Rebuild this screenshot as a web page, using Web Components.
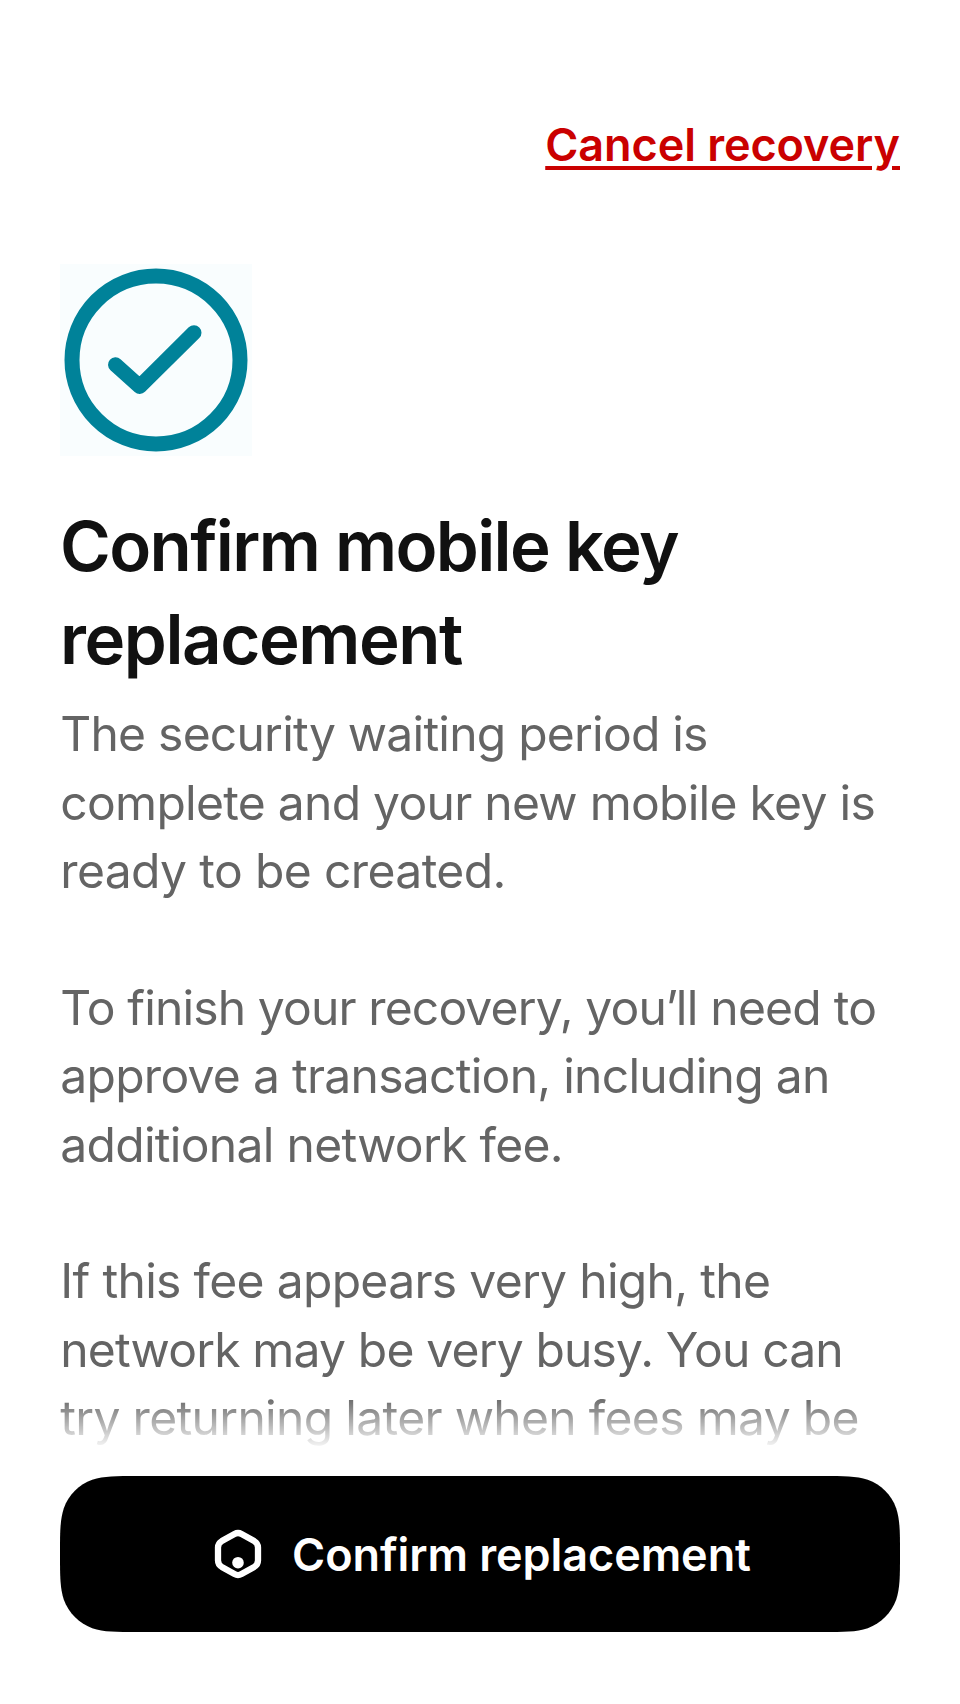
<!DOCTYPE html>
<html lang="en"><head><meta charset="utf-8"><title>Recovery</title>
<style>html,body{margin:0;background:#fff}body{font-family:Inter,"Liberation Sans",sans-serif;width:960px;height:1704px;overflow:hidden}
p span,screen-title span{letter-spacing:var(--t)}p i{font-style:normal;letter-spacing:-2.2px}</style></head>
<body>
<recovery-screen>
<cancel-link slot="top">Cancel recovery</cancel-link>
<status-icon></status-icon>
<screen-title><span style="--t:-1.63px">Confirm mobile key</span><br><span style="--t:-1.45px">replacement</span></screen-title>
<body-copy>
<p><span style="--t:-.77px">The security waiting period is</span><br><span style="--t:-.72px">complete and your new mobile key is</span><br><span style="--t:-.62px">ready to be created.</span></p>
<p><span style="--t:-.86px">To finish your recovery, </span><span style="--t:-.75px">yo<i>u’</i>ll need to</span><br><span style="--t:-.72px">approve a transaction, including an</span><br><span style="--t:-.7px">additional network fee.</span></p>
<p><span style="--t:-.68px">If this fee appears very high, the</span><br><span style="--t:-.82px">network may be very busy. You can</span><br><span style="--t:-.67px">try returning later when fees may be</span></p>
</body-copy>
<confirm-button slot="footer">Confirm replacement</confirm-button>
</recovery-screen>
<script>
const define=(name,html)=>customElements.define(name,class extends HTMLElement{
constructor(){super();this.attachShadow({mode:'open'}).innerHTML=html;}});
define('recovery-screen',`<style>
:host{display:flex;flex-direction:column;width:960px;height:1704px;box-sizing:border-box;padding:0 60px;background:#fff}
header{height:264px;flex:none;display:flex;justify-content:flex-end;align-items:flex-start;padding-top:118px;box-sizing:border-box}
main{height:1212px;flex:none;overflow:hidden;display:flex;flex-direction:column;margin:0 -30px;padding:0 30px;box-sizing:border-box;-webkit-mask-image:linear-gradient(#000 1132px,transparent 1186px)}
</style><header><slot name="top"></slot></header><main><slot></slot></main><slot name="footer"></slot>`);
define('cancel-link',`<style>:host{display:block}
a{display:block;color:#ca0000;font-size:45px;line-height:54px;font-weight:600;letter-spacing:-.08px;text-decoration:underline;text-decoration-thickness:4px;text-underline-offset:5px;white-space:nowrap}</style><a><slot></slot></a>`);
define('status-icon',`<style>:host{display:block;width:192px;height:192px;background:#f9fdfe}svg{display:block}</style>
<svg width="192" height="192" viewBox="0 0 192 192" fill="none" stroke="#008299" stroke-width="15"><circle cx="96" cy="96" r="84"/><path d="M55.5 100.7L79.7 122.5L134 68.7" stroke-linecap="round" stroke-linejoin="round"/></svg>`);
define('screen-title',`<style>:host{display:block;margin-top:44px;font-size:69px;line-height:93px;font-weight:600;color:#111;white-space:nowrap}</style><slot></slot>`);
define('body-copy',`<style>:host{display:flex;flex-direction:column;gap:68.3px;margin:14.3px 0 0 .3px;font-size:48px;line-height:68.4px;color:#646464;white-space:nowrap}
::slotted(p){margin:0}</style><slot></slot>`);
const r=51,k=n=>n*r,W=840,H=156;
const corner=(X,Y)=>[[1.528665,0],[1.08849296,0],[.86840694,0],[.63149379,.07491139],[.37282383,.16905956],[.16905956,.37282383],[.07491139,.63149379],[0,.86840694],[0,1.08849296],[0,1.528665]].map(([a,b])=>X(k(a))+' '+Y(k(b)));
const id=v=>v,fx=v=>W-v,fy=v=>H-v;
const seg=p=>`${p[0]}C${p.slice(1).join(' ')}`;
const shape='M'+seg(corner(id,id))+'L'+seg(corner(id,fy).reverse())+'L'+seg(corner(fx,fy))+'L'+seg(corner(fx,id).reverse())+'Z';
define('confirm-button',`<style>:host{display:block;height:156px;flex:none}
button{all:unset;box-sizing:border-box;display:flex;width:100%;height:156px;padding-left:4px;align-items:center;justify-content:center;gap:29px;background:#000;color:#fff;clip-path:path("${shape}");font-size:45px;font-weight:600;letter-spacing:-.08px;white-space:nowrap}</style>
<button><svg width="50" height="54" viewBox="0 0 50 54"><path d="M21.5 6.9Q25 5 28.5 6.9L41.2 14.1Q45 16.4 45 20.4V33.6Q45 37.6 41.2 39.9L28.5 47.1Q25 49 21.5 47.1L8.8 39.9Q5 37.6 5 33.6V20.4Q5 16.4 8.8 14.1Z" fill="none" stroke="#fff" stroke-width="6.3" stroke-linejoin="round"/><circle cx="25" cy="35.7" r="5.8" fill="#fff"/></svg><span><slot></slot></span></button>`);
</script></body></html>
